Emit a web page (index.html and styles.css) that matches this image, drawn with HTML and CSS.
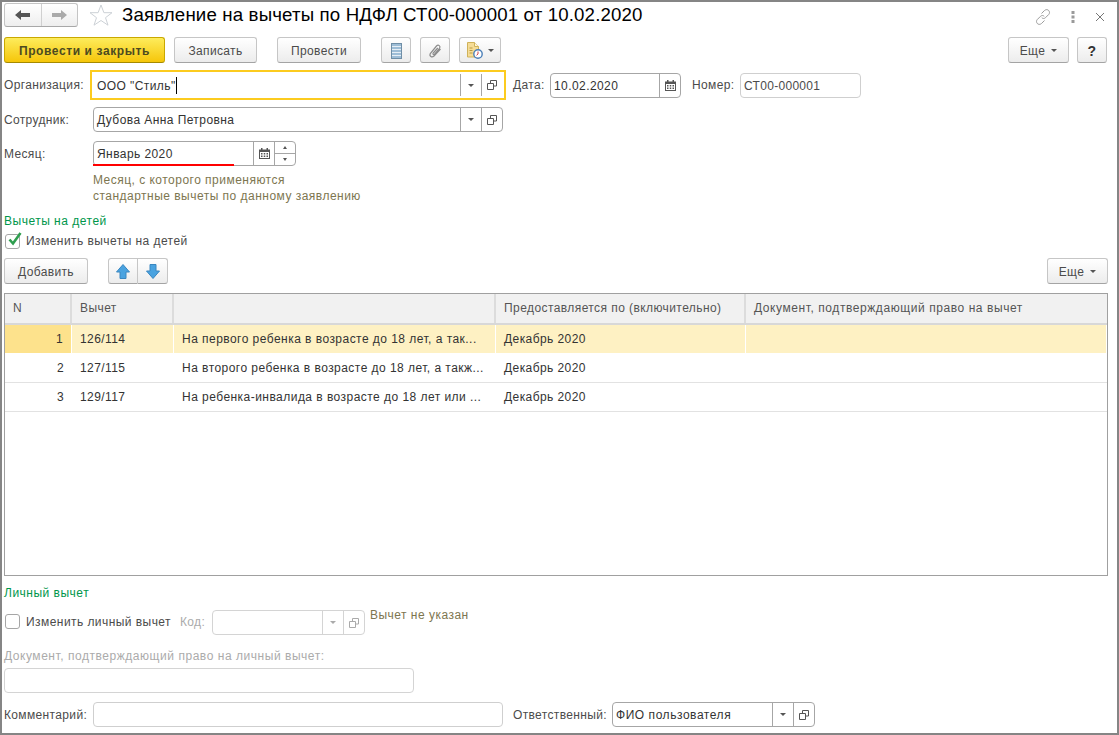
FILE: index.html
```html
<!DOCTYPE html>
<html lang="ru">
<head>
<meta charset="utf-8">
<title>Заявление на вычеты</title>
<link rel="stylesheet" href="styles.css">
</head>
<body>
<svg class="defs" width="0" height="0">
  <symbol id="open" viewBox="0 0 10 10"><path d="M3.500 3V.5h6v5.500H7M.5 3.500h6v6h-6z" fill="none" stroke="currentColor"/></symbol>
  <symbol id="cal" viewBox="0 0 11 11"><path d="M0 1.500h11V11H0z" fill="currentColor"/><path d="M1 4h9v6H1z" fill="#fff"/><path d="M2 0h1.500v2.500H2zM7.500 0H9v2.500H7.500z" fill="currentColor"/><path d="M2 5h1.500v1.500H2zM4.750 5h1.500v1.500h-1.500zM7.500 5H9v1.500H7.500zM2 7.500h1.500V9H2zM4.750 7.500h1.500V9h-1.500zM7.500 7.500H9V9H7.500z" fill="currentColor"/></symbol>
</svg>
<main class="form">
  <header class="titlebar">
    <div class="nav">
      <span class="nav-btn"><svg width="15" height="10" viewBox="0 0 15 10"><path d="M0 5l6-5v3h9v4H6v3z" fill="#555"/></svg></span>
      <span class="nav-btn"><svg width="15" height="10" viewBox="0 0 15 10"><path d="M15 5L9 0v3H0v4h9v3z" fill="#aaa"/></svg></span>
    </div>
    <svg class="star" width="24" height="22" viewBox="0 0 24 22"><path d="M12 1l2.900 7.700h8.100l-6.500 5 2.500 7.500-7-4.700-7 4.700 2.500-7.500-6.500-5h8.100z" fill="#fff" stroke="#ccd1d6"/></svg>
    <h1 class="title">Заявление на вычеты по НДФЛ СТ00-000001 от 10.02.2020</h1>
    <div class="win-icons">
      <svg width="16" height="16" viewBox="0 0 16 16"><path d="M6.500 4.500l3-3c1.500-1.300 3.300-1 4.200 0s1.200 2.700 0 4l-3.200 3.200c-1.200 1.100-2.700 1-3.700 0M9.500 11.500l-3 3c-1.500 1.300-3.300 1-4.200 0s-1.200-2.700 0-4l3.200-3.200c1.200-1.100 2.700-1 3.700 0" fill="none" stroke="#9b9b9b"/></svg>
      <svg width="4" height="12" viewBox="0 0 4 12"><path d="M.5 0h3v3h-3zM.5 4.500h3v3h-3zM.5 9h3v3h-3z" fill="#9a9a9a"/></svg>
      <svg width="10" height="10" viewBox="0 0 10 10"><path d="M1 1l8 8M9 1l-8 8" stroke="#777" fill="none"/></svg>
    </div>
  </header>

  <div class="toolbar tb-main">
    <button class="btn primary w-post-close">Провести и закрыть</button>
    <button class="btn w-save">Записать</button>
    <button class="btn w-post">Провести</button>
    <button class="btn w-icon w-first"><svg width="11" height="16" viewBox="0 0 11 16"><rect x=".5" y=".5" width="10" height="15" fill="#9dbdd6" stroke="#6f8ea6"/><path d="M1 3.500h9M1 6.500h9M1 9.500h9M1 12.500h9" stroke="#e6eef5"/></svg></button>
    <button class="btn w-icon"><svg width="14" height="16" viewBox="0 0 14 16"><path d="M12.500 6L6 13c-2.200 2-5 .2-3.700-2.500L8.500 3c1.800-2 4.500.2 3 2.300L6.500 11.200c-.9.900-2.200 0-1.300-1.200L9.800 5" fill="none" stroke="#8c8c8c" stroke-width="1.200"/></svg></button>
    <button class="btn w-doc"><svg width="16" height="17" viewBox="0 0 16 17"><path d="M.5.5h7l4 4V15H.5z" fill="#f5dc96" stroke="#cfb25a"/><path d="M7.500.5v4h4" fill="#fff6d8" stroke="#cfb25a"/><path d="M2.500 6h3M2.500 8.500h3M2.500 11h3" stroke="#b89a40"/><circle cx="11" cy="12" r="4.200" fill="#fff" stroke="#4a7fb8" stroke-width="1.400"/><path d="M11 9.500V12l-1.500 1.300" stroke="#d04040" fill="none"/></svg><i class="caret"></i></button>
    <span class="spacer"></span>
    <button class="btn w-more">Еще<i class="caret"></i></button>
    <button class="btn w-help"><b>?</b></button>
  </div>

  <div class="row row-org">
    <label class="lbl lbl-main">Организация:</label>
    <div class="field focus w-org">
      <span class="val">ООО "Стиль"<i class="cursor"></i></span>
      <span class="fb"><i class="caret"></i></span>
      <span class="fb"><svg class="ic" width="10" height="10"><use href="#open"/></svg></span>
    </div>
    <label class="lbl lbl-date">Дата:</label>
    <div class="field w-date">
      <span class="val">10.02.2020</span>
      <span class="fb"><svg class="ic" width="11" height="11"><use href="#cal"/></svg></span>
    </div>
    <label class="lbl lbl-num">Номер:</label>
    <div class="field plain w-num"><span class="val">СТ00-000001</span></div>
  </div>

  <div class="row row-emp">
    <label class="lbl lbl-main">Сотрудник:</label>
    <div class="field w-emp">
      <span class="val">Дубова Анна Петровна</span>
      <span class="fb"><i class="caret"></i></span>
      <span class="fb"><svg class="ic" width="10" height="10"><use href="#open"/></svg></span>
    </div>
  </div>

  <div class="row row-month">
    <label class="lbl lbl-main">Месяц:</label>
    <div class="field w-month">
      <span class="val">Январь 2020</span>
      <span class="fb"><svg class="ic" width="11" height="11"><use href="#cal"/></svg></span>
      <span class="fb spin"><span class="up"></span><span class="down"></span></span>
      <i class="redline"></i>
    </div>
  </div>

  <p class="hint">Месяц, с которого применяются<br>стандартные вычеты по данному заявлению</p>

  <h2 class="group g-children">Вычеты на детей</h2>
  <div class="check-row">
    <span class="check"><svg width="17" height="17" viewBox="0 0 17 17"><path d="M3.500 7.500l3.500 4L14.500 1" fill="none" stroke="#2f9e4f" stroke-width="2.600"/></svg></span>
    <span class="lbl lbl-check">Изменить вычеты на детей</span>
  </div>

  <div class="toolbar tb-table">
    <button class="btn w-add">Добавить</button>
    <div class="pair">
      <button class="btn w-arrow"><svg width="14" height="15" viewBox="0 0 14 15"><path d="M7 .5L13.500 8H10v6.500H4V8H.5z" fill="#4aa3e0" stroke="#3a87c0"/></svg></button>
      <button class="btn w-arrow"><svg width="14" height="15" viewBox="0 0 14 15"><path d="M7 14.500L13.500 7H10V.5H4V7H.5z" fill="#4aa3e0" stroke="#3a87c0"/></svg></button>
    </div>
    <span class="spacer"></span>
    <button class="btn w-more">Еще<i class="caret"></i></button>
  </div>

  <section class="table">
    <div class="tr head">
      <div class="td">N</div><div class="td">Вычет</div><div class="td"></div><div class="td">Предоставляется по (включительно)</div><div class="td td-doc">Документ, подтверждающий право на вычет</div>
    </div>
    <div class="tr sel">
      <div class="td num">1</div><div class="td">126/114</div><div class="td wide">На первого ребенка в возрасте до 18 лет, а так...</div><div class="td">Декабрь 2020</div><div class="td"></div>
    </div>
    <div class="tr">
      <div class="td num">2</div><div class="td">127/115</div><div class="td wide">На второго ребенка в возрасте до 18 лет, а такж...</div><div class="td">Декабрь 2020</div><div class="td"></div>
    </div>
    <div class="tr">
      <div class="td num">3</div><div class="td">129/117</div><div class="td wide">На ребенка-инвалида в возрасте до 18 лет или ...</div><div class="td">Декабрь 2020</div><div class="td"></div>
    </div>
  </section>

  <h2 class="group g-personal">Личный вычет</h2>
  <div class="row row-personal">
    <span class="check empty"></span>
    <span class="lbl lbl-check lbl-change">Изменить личный вычет</span>
    <span class="lbl off lbl-code">Код:</span>
    <div class="field off w-code">
      <span class="val"></span>
      <span class="fb"><i class="caret"></i></span>
      <span class="fb"><svg class="ic" width="10" height="10"><use href="#open"/></svg></span>
    </div>
    <span class="note">Вычет не указан</span>
  </div>
  <p class="lbl off doc-label">Документ, подтверждающий право на личный вычет:</p>
  <div class="field off plain w-doc-field"></div>

  <div class="row row-bottom">
    <label class="lbl lbl-main">Комментарий:</label>
    <div class="field plain w-emp"></div>
    <label class="lbl lbl-resp">Ответственный:</label>
    <div class="field w-resp">
      <span class="val val-wide">ФИО пользователя</span>
      <span class="fb"><i class="caret"></i></span>
      <span class="fb"><svg class="ic" width="10" height="10"><use href="#open"/></svg></span>
    </div>
  </div>
</main>
</body>
</html>
```
FILE: styles.css
```css
* { box-sizing: border-box; }
html, body { margin: 0; padding: 0; background: #fff; }
body { width: 1119px; height: 735px; overflow: hidden; font: 12px/16px "Liberation Sans", Arial, sans-serif; letter-spacing: .35px; color: #4b4b4b; }
.defs { display: block; height: 0; }
.form { width: 1119px; height: 735px; border: 2px solid #858585; padding: 0 9px 0 2px; display: flex; flex-direction: column; }

.titlebar { display: flex; align-items: flex-start; height: 28px; margin-top: 1px; }
.nav { display: flex; width: 74px; height: 24px; border: 1px solid #c4c4c4; border-bottom-color: #a8a8a8; border-radius: 3px; background: linear-gradient(#fff, #eeeeee); }
.nav-btn { flex: 1; display: flex; align-items: center; justify-content: center; }
.nav-btn + .nav-btn { border-left: 1px solid #d0d0d0; }
.star { margin: 1px 0 0 11px; }
.title { margin: 0 0 0 9px; font-size: 18.67px; line-height: 24px; font-weight: 400; color: #000; letter-spacing: .15px; white-space: nowrap; }
.win-icons { margin: 6px 3px 0 auto; display: flex; align-items: center; gap: 20px; }

.toolbar { display: flex; margin-top: 6px; height: 26px; }
.tb-main { padding-right: 1px; }
.spacer { flex: 1; }
.btn { height: 26px; padding: 1px 0 0; margin: 0 0 0 9px; font: inherit; letter-spacing: inherit; color: #4b4b4b; border: 1px solid #c6c6c6; border-bottom-color: #a4a4a4; border-radius: 3px; background: linear-gradient(#fff, #ececec); display: inline-flex; align-items: center; justify-content: center; }
.btn.primary { margin-left: 0; border-color: #c9a800 #c9a800 #a58a00; background: linear-gradient(#fdec5c, #f6c60a); color: #4c4a20; font-weight: 700; letter-spacing: .6px; }
.w-post-close { width: 161px; }
.w-save { width: 83px; }
.w-post { width: 84px; margin-left: 20px; }
.w-icon { width: 30px; }
.w-first { margin-left: 20px; }
.w-doc { width: 42px; gap: 5px; }
.w-more { width: 61px; gap: 6px; }
.w-help { width: 30px; margin-left: 8px; color: #333; font-size: 14px; }
.caret { display: inline-block; width: 0; height: 0; border: 3px solid transparent; border-top: 3px solid #555; border-bottom: 0; }

.row { display: flex; align-items: center; height: 25px; }
.row-org { margin-top: 7px; height: 30px; }
.row-emp { margin-top: 7px; }
.row-month { margin-top: 9px; }
.lbl { white-space: nowrap; margin: 0; }
.lbl-main { width: 89px; }
.lbl-date { margin-left: 7px; width: 37px; }
.lbl-num { margin-left: 11px; width: 48px; }
.lbl-check { letter-spacing: .44px; }

.field { display: flex; align-items: stretch; height: 25px; border: 1px solid #a6a6a6; border-radius: 4px; background: #fff; position: relative; color: #333; }
.field.plain { border-color: #cfcfcf; }
.field.focus { border: 2px solid #fccb1f; border-radius: 0; height: 30px; margin-left: -3px; padding: 2px 2px 2px 2px; }
.val { flex: 1; padding: 0 3px; line-height: 25px; white-space: nowrap; overflow: hidden; letter-spacing: .42px; }
.focus .val { line-height: 24px; }
.val-wide { letter-spacing: .55px; }
.fb { width: 21px; flex: none; border-left: 1px solid #a6a6a6; display: flex; align-items: center; justify-content: center; color: #555; }
.cursor { display: inline-block; width: 1px; height: 17px; background: #000; vertical-align: -4px; }
.ic { display: block; }
.w-org { width: 416px; }
.w-emp { width: 410px; }
.w-date { width: 131px; }
.w-num { width: 121px; }
.w-num .val { color: #4b4b4b; letter-spacing: .3px; }
.w-month { width: 203px; }
.spin { flex-direction: column; }
.spin .up, .spin .down { flex: 1; width: 100%; display: flex; align-items: center; justify-content: center; }
.spin .down { border-top: 1px solid #a6a6a6; }
.spin .up::before { content: ""; border: 2.500px solid transparent; border-bottom: 3px solid #555; border-top: 0; }
.spin .down::before { content: ""; border: 2.500px solid transparent; border-top: 3px solid #555; border-bottom: 0; }
.redline { position: absolute; left: -1px; bottom: -1px; width: 141px; height: 2px; background: #f00; }

.hint { margin: 6px 0 0 89px; line-height: 16px; color: #7d7650; letter-spacing: .48px; }
.group { margin: 9px 0 0; font: inherit; letter-spacing: .5px; color: #00964b; line-height: 16px; }
.check-row { display: flex; align-items: center; height: 18px; margin-top: 3px; }
.check { width: 15px; height: 15px; margin: 0 6px 0 1px; border: 1px solid #a6a6a6; border-radius: 3px; flex: none; background: #fff; position: relative; }
.check svg { position: absolute; left: 0; top: -3px; }

.tb-table { margin-top: 8px; }
.w-add { width: 84px; margin-left: 0; }
.pair { display: flex; margin-left: 20px; }
.w-arrow { width: 30px; margin: 0; border-radius: 3px 0 0 3px; }
.w-arrow + .w-arrow { border-left: 0; border-radius: 0 3px 3px 0; }

.table { margin-top: 9px; height: 283px; border: 1px solid #a0a0a0; flex: none; }
.tr { display: grid; grid-template-columns: 67px 102px 322px 250px 1fr; height: 29px; border-bottom: 1px solid #e2e2e2; color: #333; }
.td { padding: 0 8px; line-height: 28px; white-space: nowrap; overflow: hidden; letter-spacing: .42px; }
.td.wide { letter-spacing: .46px; }
.td.num { text-align: right; }
.head { height: 31px; background: #f1f1f1; border-bottom: 2px solid #d8d8d8; color: #555; }
.head .td { border-right: 2px solid #dcdcdc; line-height: 29px; }
.head .td:last-child { border-right: 0; }
.head .td-doc { letter-spacing: .57px; }
.sel { background: #fef1c3; border-bottom: 1px solid #fff; }
.sel .td { border-right: 1px solid #fff; }
.sel .td:first-child { background: #fde28c; }

.g-personal { margin-top: 9px; }
.row-personal { margin-top: 9px; position: relative; }
.row-personal .check { margin: 0 6px 2px 1px; }
.lbl-change { width: 154px; margin-bottom: 2px; }
.off { color: #ababab; }
.field.off { border-color: #d4d4d4; }
.field.off .fb { border-color: #d4d4d4; color: #aaa; }
.field.off .caret { border-top-color: #aaa; }
.lbl-code { width: 32px; margin-bottom: 2px; }
.w-code { width: 153px; }
.note { margin: -16px 0 0 5px; color: #7d7650; letter-spacing: .48px; }
.doc-label { margin-top: 13px; letter-spacing: .54px; }
.w-doc-field { width: 410px; margin-top: 4px; flex: none; }
.row-bottom { margin-top: 9px; }
.lbl-resp { margin-left: 10px; width: 99px; }
.w-resp { width: 203px; }
```
